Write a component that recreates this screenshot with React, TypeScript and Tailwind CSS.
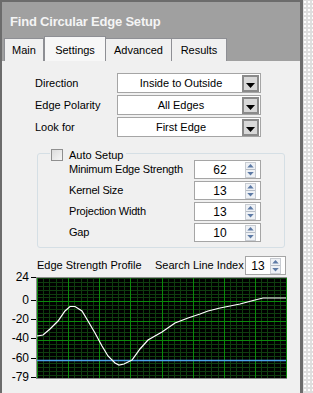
import React from "react";

const font = { fontFamily: '"Liberation Sans", Arial, sans-serif' };

function DropArrow() {
  return (
    <div className="w-[17px] h-[17px] mr-[1px] border-2 border-[#8a8a8a] bg-[#d8d8d8] flex items-end justify-center pb-[2px]">
      <svg width="9" height="5" viewBox="0 0 9 5">
        <path d="M0 0 H9 L4.5 5 Z" fill="#000" />
      </svg>
    </div>
  );
}

function Dropdown({ text }: { text: string }) {
  return (
    <div className="w-[144px] h-[20px] bg-white border border-[#a5a5a5] flex items-center shrink-0">
      <div className="flex-1 text-center text-[11px] text-black leading-none pl-[2px] whitespace-nowrap">{text}</div>
      <DropArrow />
    </div>
  );
}

function Spinner() {
  return (
    <div className="w-[11px] h-[16px] flex flex-col items-center justify-center gap-[1px] bg-[#eef1f5] border border-[#c8ccd2]">
      <svg width="7" height="6" viewBox="0 0 7 6">
        <path d="M0 5 L3.5 1 L7 5 Z" fill="#5d7aa5" />
      </svg>
      <div className="w-[9px] h-px bg-[#b5bcc6]" />
      <svg width="7" height="6" viewBox="0 0 7 6">
        <path d="M0 1 H7 L3.5 5 Z" fill="#5d7aa5" />
      </svg>
    </div>
  );
}

function NumBox({ value, w }: { value: string; w: number }) {
  return (
    <div
      className="h-[19px] bg-white border border-[#a5a5a5] flex items-center pr-[4px] shrink-0"
      style={{ width: w }}
    >
      <div className="flex-1 text-center text-[12px] text-black leading-none">{value}</div>
      <Spinner />
    </div>
  );
}

function Chart() {
  const W = 249;
  const H = 100;
  const yv = (v: number) => ((24 - v) * H) / 103;
  const minorV: number[] = [];
  for (let i = 0; i <= 40; i++) minorV.push(Math.round((i * W) / 40) + 0.5);
  const majorV: number[] = [];
  for (let i = 0; i <= 8; i++) majorV.push(Math.round((i * W) / 8) + 0.5);
  const minorH: number[] = [];
  for (let v = 24; v >= -79; v -= 4) minorH.push(Math.round(yv(v)) + 0.5);
  const majorH = [0, -20, -40, -60].map((v) => Math.round(yv(v)) + 0.5);
  const pts: [number, number][] = [
    [37, 335], [43, 334], [50, 328], [58, 320], [65, 310], [70, 305.5], [75, 305.5],
    [82, 310], [88, 320], [95, 332], [102, 345], [108, 355], [115, 362], [119, 364],
    [124, 363], [132, 359], [140, 348], [148, 339], [162, 331], [175, 322],
    [188, 317], [200, 313], [208, 310], [220, 307], [240, 303], [255, 299],
    [263, 297], [286, 297],
  ];
  const d = pts.map(([x, y], i) => `${i ? "L" : "M"}${x - 37} ${y - 277}`).join(" ");
  return (
    <svg width={W + 2} height={H + 2} viewBox={`-1 -1 ${W + 2} ${H + 2}`} className="block">
      <rect x={-1} y={-1} width={W + 2} height={H + 2} fill="#8c8c8c" />
      <rect x={0} y={0} width={W} height={H} fill="#000" />
      {minorV.map((x, i) => (
        <line key={"mv" + i} x1={x} x2={x} y1={0} y2={H} stroke="#0f3d0f" strokeWidth={1} />
      ))}
      {minorH.map((y, i) => (
        <line key={"mh" + i} x1={0} x2={W} y1={y} y2={y} stroke="#0f3d0f" strokeWidth={1} />
      ))}
      {majorV.map((x, i) => (
        <line key={"Mv" + i} x1={x} x2={x} y1={0} y2={H} stroke="#0a8a0a" strokeWidth={1} />
      ))}
      {majorH.map((y, i) => (
        <line key={"Mh" + i} x1={0} x2={W} y1={y} y2={y} stroke="#0a8a0a" strokeWidth={1} />
      ))}
      <line x1={0} x2={W} y1={Math.round(yv(-62)) - 0.5} y2={Math.round(yv(-62)) - 0.5} stroke="#4aa0e8" strokeWidth={1.3} />
      <path d={d} fill="none" stroke="#fff" strokeWidth={1.2} />
    </svg>
  );
}

export default function App() {
  const tick = (label: string, cls: string) => (
    <div className={"absolute right-0 flex items-center gap-[2px] " + cls}>
      <span className="text-[12px] leading-none text-black">{label}</span>
      <div className="w-[5px] h-px bg-black" />
    </div>
  );
  return (
    <div className="w-[313px] h-[393px] flex bg-[#e9e9e9]" style={font}>
      <div className="w-[303px] h-[393px] flex flex-col bg-[#a0a0a0] border-t-2 border-l-2 border-r-[3px] border-[#6c6c6c]">
        <div className="h-[35px] flex items-center pl-[8px] pt-[5px]">
          <span className="text-[13px] font-bold text-[#f4f4f4] tracking-[-0.2px] whitespace-nowrap">Find Circular Edge Setup</span>
        </div>
        <div className="h-[24px] flex items-end pl-[2px] text-[11px]">
          <div className="w-[40px] h-[23px] bg-[#f0f0f0] border border-b-0 border-[#8e8f94] flex items-center justify-center text-black">Main</div>
          <div className="w-[62px] h-[25px] bg-[#f7f7f7] border border-b-0 border-[#8e8f94] flex items-start pt-[5px] justify-center text-black">Settings</div>
          <div className="w-[66px] h-[23px] bg-[#f0f0f0] border border-b-0 border-l-0 border-[#8e8f94] flex items-center justify-center text-black">Advanced</div>
          <div className="w-[55px] h-[23px] bg-[#f0f0f0] border border-b-0 border-l-0 border-[#8e8f94] flex items-center justify-center text-black">Results</div>
        </div>
        <div className="flex-1 bg-[#f0f0f0] flex flex-col text-[11px] text-black whitespace-nowrap">
          <div className="flex flex-col gap-[2px] pt-[12px] pl-[33px]">
            {[
              ["Direction", "Inside to Outside"],
              ["Edge Polarity", "All Edges"],
              ["Look for", "First Edge"],
            ].map(([l, v]) => (
              <div key={l} className="flex items-center h-[20px]">
                <div className="w-[82px] shrink-0">{l}</div>
                <Dropdown text={v} />
              </div>
            ))}
          </div>
          <div className="relative ml-[35px] mt-[16px] w-[248px] h-[95px] rounded-[3px] border border-[#d5dfe5]">
            <div className="absolute left-[12px] top-[-7px] flex items-center gap-[6px] bg-[#f0f0f0] pr-[3px] pl-[1px]">
              <div className="w-[12px] h-[12px] border border-[#8f8f8f] bg-gradient-to-br from-[#dcdcdc] to-[#f6f6f6]" />
              <span>Auto Setup</span>
            </div>
            <div className="flex flex-col gap-[2px] pt-[6px] pl-[31px]">
              {[
                ["Minimum Edge Strength", "62"],
                ["Kernel Size", "13"],
                ["Projection Width", "13"],
                ["Gap", "10"],
              ].map(([l, v]) => (
                <div key={l} className="flex items-center h-[19px]">
                  <div className="w-[125px] shrink-0 tracking-[-0.2px]">{l}</div>
                  <NumBox value={v} w={67} />
                </div>
              ))}
            </div>
          </div>
          <div className="flex items-center mt-[8px] pl-[35px] h-[19px]">
            <div className="w-[118px] shrink-0">Edge Strength Profile</div>
            <div className="w-[90px] shrink-0">Search Line Index</div>
            <NumBox value="13" w={41} />
          </div>
          <div className="flex mt-[2px]">
            <div className="relative w-[34px] h-[102px] shrink-0">
              {tick("24", "top-[-6px]")}
              {tick("0", "top-[17px]")}
              {tick("-20", "top-[36px]")}
              {tick("-40", "top-[55px]")}
              {tick("-60", "top-[75px]")}
              {tick("-79", "top-[94px]")}
            </div>
            <Chart />
          </div>
        </div>
      </div>
      <div className="w-[10px] h-[393px] bg-[#dedede] bg-[radial-gradient(#ffffff_1px,transparent_1.2px)] bg-[length:4px_4px]" />
    </div>
  );
}
